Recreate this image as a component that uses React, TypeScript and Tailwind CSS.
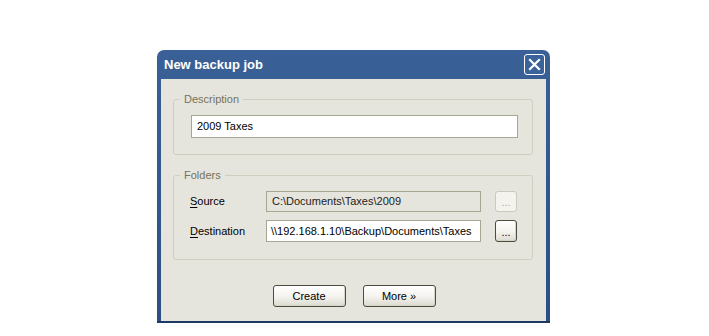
import React from 'react'

const font = { fontFamily: '"Liberation Sans", Arial, sans-serif' }

function Accel({ first, rest }: { first: string; rest: string }) {
  return (
    <span>
      <span className="underline underline-offset-2">{first}</span>
      {rest}
    </span>
  )
}

function XpButton({
  children,
  disabled,
  className = '',
}: {
  children: React.ReactNode
  disabled?: boolean
  className?: string
}) {
  return (
    <button
      className={`flex items-center justify-center rounded-[3px] border text-[11px] ${
        disabled
          ? 'border-[#cbc9bc] bg-[#f4f3ee] text-[#aca899]'
          : 'border-[#4d4b3d] bg-gradient-to-b from-white via-[#f5f4f0] to-[#dcdad0] text-black shadow-[inset_-1px_-1px_0_#d6d4c8]'
      } ${className}`}
    >
      {children}
    </button>
  )
}

export default function App() {
  return (
    <div className="h-[336px] w-[709px] bg-white pl-[157px] pt-[50px]" style={font}>
      <div className="flex h-[273px] w-[393px] flex-col rounded-t-[7px] bg-gradient-to-b from-[#3a6197] to-[#2b4f82] px-[4px] pb-[2px] shadow-[inset_0_-2px_0_#1d3a64]">
        {/* Title bar */}
        <div className="flex h-[29px] items-center justify-between pl-[3px] pr-[1px]">
          <span className="text-[13px] font-bold text-white">New backup job</span>
          <button className="flex h-[21px] w-[21px] items-center justify-center rounded-[3px] border border-white bg-[#3a6399]">
            <svg width="13" height="13" viewBox="0 0 13 13">
              <path d="M2 2 L11 11 M11 2 L2 11" stroke="white" strokeWidth="2.2" strokeLinecap="square" />
            </svg>
          </button>
        </div>

        {/* Client area */}
        <div className="flex flex-1 flex-col bg-[#e6e5dd] pl-[12px] pr-[13px] pt-[14px] text-[11px] text-black">
          <fieldset className="rounded-[3px] border border-[#d0cfbf]">
            <legend className="ml-[6px] px-[4px] leading-[13px] text-[#74725a]">Description</legend>
            <div className="pb-[16px] pl-[17px] pr-[14px] pt-[9px]">
              <div className="flex h-[23px] items-center border border-[#a5a891] bg-white px-[5px]">
                2009 Taxes
              </div>
            </div>
          </fieldset>

          <fieldset className="mt-[14px] rounded-[3px] border border-[#d0cfbf]">
            <legend className="ml-[6px] px-[4px] leading-[13px] text-[#74725a]">Folders</legend>
            <div className="flex flex-col gap-[8px] pb-[17px] pl-[16px] pr-[14px] pt-[9px]">
              <div className="flex h-[21px] items-center">
                <span className="w-[76px]">
                  <Accel first="S" rest="ource" />
                </span>
                <div className="flex h-[21px] w-[215px] items-center border border-[#a5a891] bg-[#e6e5dd] px-[5px] text-[#222]">
                  C:\Documents\Taxes\2009
                </div>
                <XpButton disabled className="ml-[14px] h-[21px] w-[22px] pt-[2px]">
                  ...
                </XpButton>
              </div>
              <div className="flex h-[22px] items-center">
                <span className="w-[76px]">
                  <Accel first="D" rest="estination" />
                </span>
                <div className="flex h-[22px] w-[215px] items-center border border-[#a5a891] bg-white px-[4px]">
                  \\192.168.1.10\Backup\Documents\Taxes
                </div>
                <XpButton className="ml-[14px] h-[22px] w-[22px] pt-[2px]">...</XpButton>
              </div>
            </div>
          </fieldset>

          <div className="mt-[25px] flex justify-center gap-[17px] pl-[2px]">
            <XpButton className="h-[22px] w-[73px]">Create</XpButton>
            <XpButton className="h-[22px] w-[73px]">More »</XpButton>
          </div>
        </div>
      </div>
    </div>
  )
}
